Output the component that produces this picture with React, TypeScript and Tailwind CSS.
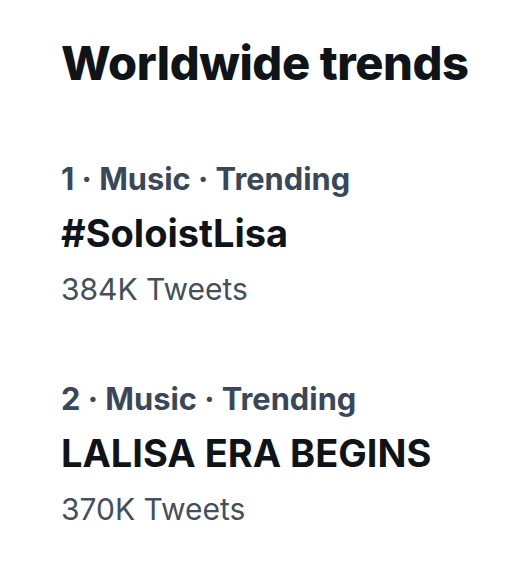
const trends = [
  { rank: 1, category: 'Music', name: '#SoloistLisa', count: '384K Tweets' },
  { rank: 2, category: 'Music', name: 'LALISA ERA BEGINS', count: '370K Tweets' },
]

export default function App() {
  return (
    <div className="w-[532px] h-[578px] bg-white pl-[61px] pt-[37px] font-['Inter','Liberation_Sans',sans-serif] antialiased">
      <h1 className="text-[47px] leading-[52px] font-extrabold tracking-[-0.4px] text-[#0f1419]">Worldwide trends</h1>
      <div className="mt-[72px] flex flex-col gap-[74px]">
        {trends.map(t => (
          <div key={t.rank} className="flex flex-col">
            <div className="text-[30.8px] leading-[36px] font-bold text-[#394759]">
              {t.rank} · {t.category} · Trending
            </div>
            <div className="mt-[14px] text-[38px] leading-[44px] font-bold text-[#0f1419]">{t.name}</div>
            <div className="mt-[16px] text-[30px] leading-[36px] text-[#434f5c]">{t.count}</div>
          </div>
        ))}
      </div>
    </div>
  )
}
